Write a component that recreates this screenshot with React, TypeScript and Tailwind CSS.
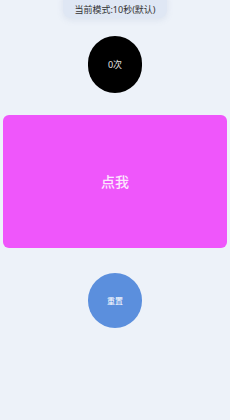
import { useState } from 'react';

export default function App() {
  const [count, setCount] = useState(0);

  return (
    <div
      className="w-[230px] h-[420px] bg-[#edf2f9] flex flex-col items-center overflow-hidden"
      style={{ fontFamily: '"Noto Sans", "Noto Sans CJK SC", sans-serif' }}
    >
      {/* Mode indicator */}
      <div className="mt-[-6px] w-[104px] h-[24px] pt-[7px] rounded-b-[8px] bg-[#dfe7f4] shadow-[0_2px_6px_rgba(120,140,180,0.15)] flex items-center justify-center">
        <span className="text-[9px] leading-none text-[#333]">当前模式:10秒(默认)</span>
      </div>

      {/* Counter */}
      <div className="mt-[18px] w-[54px] h-[57px] rounded-full bg-black flex items-center justify-center">
        <span className="text-[9px] text-[#e5e5e5]">{count}次</span>
      </div>

      {/* Tap area */}
      <button
        onClick={() => setCount(count + 1)}
        className="mt-[22px] w-[224px] h-[133px] rounded-[6px] bg-[#ef56fb] flex items-center justify-center"
      >
        <span className="text-[14px] font-medium text-[#fbe8fd]">点我</span>
      </button>

      {/* Reset */}
      <button
        onClick={() => setCount(0)}
        className="mt-[25px] w-[54px] h-[55px] rounded-full bg-[#5b8fdd] flex items-center justify-center"
      >
        <span className="text-[8px] text-white">重置</span>
      </button>
    </div>
  );
}
